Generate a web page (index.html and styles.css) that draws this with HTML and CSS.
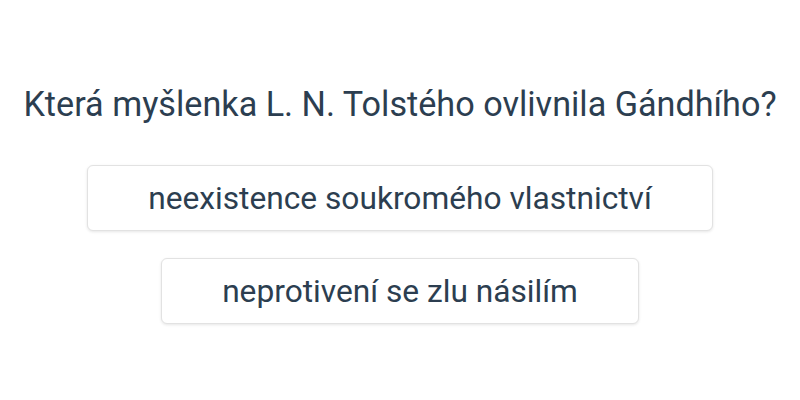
FILE: index.html
```html
<!DOCTYPE html>
<html lang="cs">
<head>
    <meta charset="UTF-8">
    <meta name="viewport" content="width=device-width, initial-scale=1.0">
    <title>Kvíz</title>
    <link rel="stylesheet" href="styles.css">
</head>
<body>
    <div class="quiz">
        <h1 class="question">Která myšlenka L. N. Tolstého ovlivnila Gándhího?</h1>
        <div class="answers">
            <button class="answer">neexistence soukromého vlastnictví</button>
            <button class="answer">neprotivení se zlu násilím</button>
        </div>
    </div>
</body>
</html>
```

FILE: styles.css
```css
body, html {
    margin: 0;
    padding: 0;
    height: 100%;
    background: #fff;
    font-family: Roboto, "Noto Sans", sans-serif;
    color: #2c3e50;
}

.quiz {
    display: flex;
    flex-direction: column;
    align-items: center;
    padding-top: 84px;
}

.question {
    margin: 0;
    font-size: 34.2px;
    font-weight: 400;
    line-height: 40px;
    white-space: nowrap;
}

.answers {
    display: flex;
    flex-direction: column;
    align-items: center;
    gap: 27px;
    margin-top: 41px;
}

.answer {
    font-family: inherit;
    font-size: 31.7px;
    color: #2c3e50;
    background: #fff;
    border: 1px solid #e2e2e2;
    border-radius: 6px;
    box-shadow: 0 1px 3px rgba(0, 0, 0, 0.1);
    padding: 0 60px;
    height: 66px;
    cursor: pointer;
}
```
